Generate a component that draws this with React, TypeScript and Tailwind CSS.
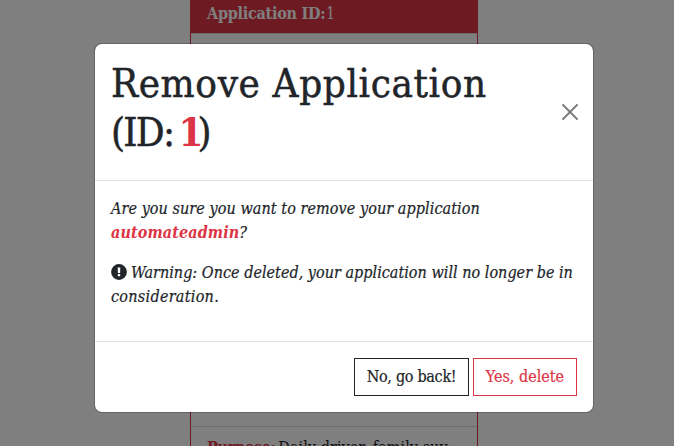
function CloseIcon() {
  return (
    <svg viewBox="0 0 16 16" className="block size-4" fill="#000" aria-hidden="true">
      <path d="M.293.293a1 1 0 0 1 1.414 0L8 6.586 14.293.293a1 1 0 1 1 1.414 1.414L9.414 8l6.293 6.293a1 1 0 0 1-1.414 1.414L8 9.414l-6.293 6.293a1 1 0 0 1-1.414-1.414L6.586 8 .293 1.707a1 1 0 0 1 0-1.414z" />
    </svg>
  );
}

function WarningIcon() {
  return (
    <svg viewBox="0 0 16 16" className="mr-1 inline-block size-4 align-[-2px]" aria-hidden="true">
      <circle cx="8" cy="8" r="7.9" fill="#212529" />
      <path d="M6.7 3.6h2.6l-.2 5.3H6.9z" fill="#fff" />
      <rect x="6.8" y="10" width="2.4" height="2.3" rx="0.5" fill="#fff" />
    </svg>
  );
}

function ApplicationCard() {
  return (
    <div className="mx-auto flex h-[446px] w-[288px] -translate-x-[3px] flex-col overflow-hidden border-x border-[#dc3545] bg-white">
      <div className="h-[33px] shrink-0 bg-[#dc3545] px-4 pt-0.5 text-white">
        <b className="tracking-[-0.25px]">Application ID:</b> <span className="-ml-[4px]">1</span>
      </div>
      <div className="h-[394px] shrink-0 border-y border-black/15" />
      <div className="shrink-0 px-4 pt-[9px] whitespace-nowrap">
        <b className="tracking-[-0.3px] text-[#dc3545]">Purpose:</b>{" "}
        <span className="-ml-[2px] tracking-[0.06px]">Daily driver, family suv</span>
      </div>
    </div>
  );
}

function RemoveDialog() {
  return (
    <div
      role="dialog"
      className="mt-[43px] flex w-[500px] flex-col rounded-lg border border-black/20 bg-white bg-clip-padding"
    >
      <div className="flex items-center justify-between border-b border-[#dee2e6] p-4">
        <h1 className="mb-2 text-[40px] leading-[47.5px] whitespace-nowrap [-webkit-text-stroke:0.5px_currentColor]">
          <span className="tracking-[0.62px]">Remove Application</span>
          <br />
          <span className="tracking-[-1.7px]">(ID:</span>
          <b className="ml-[5px] tracking-[-6px] text-[#dc3545] [-webkit-text-stroke:0]">1</b>)
        </h1>
        <button type="button" aria-label="Close" className="-mr-[9px] p-2 opacity-50">
          <CloseIcon />
        </button>
      </div>
      <div className="p-4 whitespace-nowrap italic [-webkit-text-stroke:0.2px_currentColor]">
        <p className="mb-4">
          <span className="tracking-[0.07px]">Are you sure you want to remove your application</span>
          <br />
          <b className="tracking-[0.1px] text-[#dc3545] [-webkit-text-stroke:0]">automateadmin</b>?
        </p>
        <p className="mb-4">
          <WarningIcon />
          <span className="tracking-[0.02px]">Warning: Once deleted, your application will no longer be in</span>
          <br />
          <span className="tracking-[0.28px]">consideration.</span>
        </p>
      </div>
      <div className="flex justify-end gap-1 border-t border-[#dee2e6] p-4 whitespace-nowrap [-webkit-text-stroke:0.2px_currentColor]">
        <button type="button" className="h-[38px] w-[115px] border border-[#212529] tracking-[-0.3px]">
          No, go back!
        </button>
        <button type="button" className="h-[38px] w-[104px] border border-[#dc3545] text-[#dc3545]">
          Yes, delete
        </button>
      </div>
    </div>
  );
}

export default function App() {
  return (
    <div className="relative h-[446px] w-[674px] overflow-hidden bg-white font-['DejaVu_Serif_Condensed','DejaVu_Serif',serif] text-[16px] leading-6 text-[#212529]">
      <ApplicationCard />
      <div className="absolute inset-0 flex items-start bg-black/50 pl-[94px]">
        <RemoveDialog />
      </div>
    </div>
  );
}
